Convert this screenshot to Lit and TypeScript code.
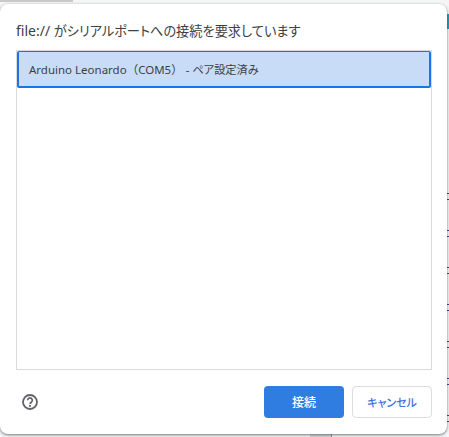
import { LitElement, html, css } from 'lit';
import { customElement } from 'lit/decorators.js';

const FONT = css`"Noto Sans", "Noto Sans CJK JP", sans-serif`;

@customElement('app-root')
export class AppRoot extends LitElement {
  static styles = css`
    :host {
      display: block;
      position: relative;
      width: 449px;
      height: 437px;
      overflow: hidden;
      background: #f4f5f6;
      font-family: ${FONT};
    }
    .tab {
      position: absolute;
      left: 0;
      top: 0;
      width: 73px;
      height: 2px;
      background: #c9c9c9;
    }
    .strip {
      position: absolute;
      left: 447px;
      top: 14px;
      width: 2px;
      height: 15px;
      background: #1e9ab5;
    }
    /* rows of the page behind the dialog, showing past its right edge */
    .ticks {
      position: absolute;
      left: 447px;
      top: 193px;
      width: 2px;
      height: 244px;
      background: repeating-linear-gradient(
        to bottom,
        #3b3f8f 0 1px,
        transparent 1px 6px,
        #3b3f8f 6px 7px,
        transparent 7px 37px
      );
    }
    .under {
      position: absolute;
      left: 310px;
      top: 434px;
      width: 21px;
      height: 3px;
      background: #d4d6d8;
      border-right: 1px solid #8c8f92;
    }
    .dialog {
      position: absolute;
      left: 0;
      top: 4px;
      box-sizing: border-box;
      width: 447px;
      height: 430px;
      padding: 17px 15px 16px 16px;
      display: flex;
      flex-direction: column;
      background: #fff;
      border-radius: 8px;
      box-shadow: 0 1px 3px rgba(60, 64, 67, 0.7);
    }
    .title {
      margin: 0 0 9px;
      font-size: 14px;
      line-height: 20px;
      font-weight: 400;
      color: #3c4043;
    }
    .title span {
      font-size: 13.2px;
      font-feature-settings: "palt";
    }
    .list {
      flex: 1;
      box-sizing: border-box;
      border: 1px solid #d9dadc;
    }
    .row {
      box-sizing: border-box;
      height: 37px;
      padding: 0 10px;
      display: flex;
      align-items: center;
      white-space: pre;
      font-size: 11.5px;
      color: #3c4043;
      background: #c8dcf8;
      border: 2px solid #1a73e8;
      border-top-width: 1px;
      border-radius: 2px;
    }
    .row span {
      font-size: 11.2px;
      font-feature-settings: "palt";
    }
    .footer {
      display: flex;
      align-items: center;
      gap: 8px;
      margin-top: 16px;
    }
    .help {
      width: 16px;
      height: 16px;
      margin-left: 6px;
      margin-right: auto;
    }
    button {
      box-sizing: border-box;
      width: 80px;
      height: 32px;
      font: 500 12px ${FONT};
      font-feature-settings: "palt";
      border-radius: 4px;
    }
    .primary {
      color: #fff;
      background: #2f7de1;
      border: none;
    }
    .secondary {
      font-size: 11px;
      color: #3b6fe0;
      background: #fff;
      border: 1px solid #dadce0;
    }
  `;

  render() {
    return html`
      <div class="tab"></div>
      <div class="strip"></div>
      <div class="ticks"></div>
      <div class="under"></div>
      <div class="dialog">
        <h1 class="title">file:// <span>がシリアルポートへの接続を要求しています</span></h1>
        <div class="list">
          <div class="row">Arduino Leonardo（COM5） - <span>ペア設定済み</span></div>
        </div>
        <div class="footer">
          <svg class="help" viewBox="0 0 16 16" fill="none">
            <circle cx="8" cy="8" r="7" stroke="#5f6368" stroke-width="1.8"></circle>
            <path d="M5.7 6.3a2.3 2.3 0 1 1 3.6 1.9c-.8.6-1.3 1-1.3 1.9" stroke="#5f6368" stroke-width="1.7"></path>
            <rect x="7.1" y="11" width="1.8" height="1.8" fill="#5f6368"></rect>
          </svg>
          <button class="primary">接続</button>
          <button class="secondary">キャンセル</button>
        </div>
      </div>
    `;
  }
}
